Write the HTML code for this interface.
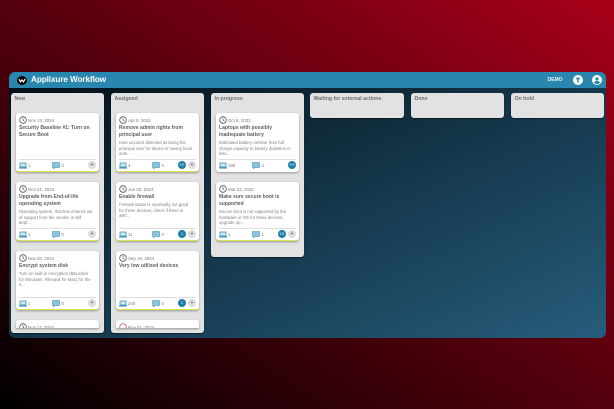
<!DOCTYPE html>
<html><head><meta charset="utf-8"><style>
*{box-sizing:border-box}
html,body{margin:0;padding:0;width:614px;height:409px;overflow:hidden}
body{background:linear-gradient(to bottom left,#a80019,#000);font-family:"Liberation Sans",sans-serif;position:relative}
.win{position:absolute;left:9px;top:72px;width:597px;height:266px;border-radius:6px;overflow:hidden;background:linear-gradient(to bottom right,#020d15,#265d7c);filter:blur(.3px)}
.bar{position:absolute;left:0;top:0;width:597px;height:16px;background:#2986ae}
.logo{position:absolute;left:8px;top:3.5px;width:10px;height:9px;border-radius:50%;background:#000}
.title{position:absolute;left:22px;top:1px;font-size:8.2px;letter-spacing:-.1px;line-height:14px;font-weight:bold;color:#fff;white-space:nowrap}
.demo{position:absolute;left:538.5px;top:2px;font-size:5px;line-height:12px;font-weight:bold;color:#e8f3f8}
.col{position:absolute;background:#e2e2e2;border-radius:3px;box-shadow:0 1px 1px rgba(0,0,0,.45);overflow:hidden}
.h{position:absolute;left:3.5px;top:2.5px;font-size:5.2px;line-height:7px;font-weight:bold;color:#707070;white-space:nowrap}
.card{position:absolute;left:5px;width:83px;height:59px;background:#fff;border-radius:3px;box-shadow:0 1px 2px rgba(0,0,0,.35);overflow:hidden}
.card.y{border-bottom:1.2px solid #dfe650}
.clk{position:absolute;left:3px;top:3px}
.d{position:absolute;left:12px;top:4.5px;font-size:4.4px;line-height:6px;color:#777;white-space:nowrap}
.t{position:absolute;left:3px;top:11.7px;width:80px;font-size:5.05px;line-height:7px;font-weight:bold;color:#606060;white-space:nowrap}
.x{position:absolute;left:3px;width:80px;font-size:4.25px;line-height:5.7px;color:#808080;white-space:nowrap}
.ln{position:absolute;left:3px;right:3px;top:46px;border-top:.5px solid #ddd}
.i1{position:absolute;left:3px;top:49px}
.i2{position:absolute;left:36px;top:49px}
.n1{position:absolute;left:12px;top:49px;font-size:4.2px;line-height:7px;color:#777}
.n2{position:absolute;left:45.5px;top:49px;font-size:4.2px;line-height:7px;color:#777}
.av{position:absolute;left:62px;top:48px;width:8px;height:8px;border-radius:50%;background:#1c7ea8;color:#d8ecf4;font-size:3.6px;line-height:8px;text-align:center}
.pl{position:absolute;left:72px;top:48px;width:8px;height:8px;border-radius:50%;background:#ddd;color:#444;font-size:5px;line-height:8px;text-align:center}
</style></head><body>
<svg width="0" height="0" style="position:absolute"><defs>
<symbol id="ck" viewBox="0 0 8 8"><circle cx="4" cy="4" r="3.3" fill="none" stroke="#555" stroke-width=".8"/><path d="M4 2v2.2l1.4.8" fill="none" stroke="#555" stroke-width=".7"/></symbol>
<symbol id="lp" viewBox="0 0 8 7"><rect x="1" y="1" width="6" height="4" fill="#cfe6f0" stroke="#2986ae" stroke-width=".7"/><path d="M0 6h8" stroke="#2986ae"/></symbol>
<symbol id="cm" viewBox="0 0 8 7"><path d="M.5.5h7v5H3L1.5 7V5.5h-1z" fill="#8cc4dc" stroke="#2986ae" stroke-width=".5"/></symbol>
</defs></svg>
<div class="win">
<div class="bar">
<div class="logo"><svg width="10" height="9" viewBox="0 0 10 9" style="display:block"><path d="M2 3.2l1.5 2.6L5 4 6.3 5.8 8.3 3" fill="none" stroke="#fff" stroke-width="1.2"/></svg></div>
<div class="title">Applixure Workflow</div>
<div class="demo">DEMO</div>
<svg style="position:absolute;left:564px;top:3px" width="10" height="10" viewBox="0 0 10 10"><circle cx="5" cy="5" r="5" fill="#fff"/><path d="M2.5 2.8h5L5.7 5v2.6H4.3V5z" fill="#2986ae"/></svg>
<svg style="position:absolute;left:583px;top:3px" width="10" height="10" viewBox="0 0 10 10"><circle cx="5" cy="5" r="5" fill="#fff"/><circle cx="5" cy="3.8" r="1.6" fill="#2986ae"/><path d="M2 7.6c.8-1.4 1.8-1.8 3-1.8s2.2.4 3 1.8C7 8.7 6 9 5 9S3 8.7 2 7.6z" fill="#2986ae"/></svg>
</div>

<div class="col" style="left:2px;top:21px;width:93px;height:240px"><div class="h">New</div>
<div class="card y" style="top:20px"><svg class="clk" width="8" height="8"><use href="#ck"/></svg><div class="d">Nov 13, 2024</div><div class="t">Security Baseline #1: Turn on<br>Secure Boot</div><div class="ln"></div><svg class="i1" width="8" height="7"><use href="#lp"/></svg><div class="n1">1</div><svg class="i2" width="8" height="7"><use href="#cm"/></svg><div class="n2">0</div><div class="pl">+</div></div>
<div class="card y" style="top:89px"><svg class="clk" width="8" height="8"><use href="#ck"/></svg><div class="d">Nov 21, 2024</div><div class="t">Upgrade from End-of-life<br>operating system</div><div class="x" style="top:27px">Operating system, that has entered out<br>of support from the vendor, is still<br>depl...</div><div class="ln"></div><svg class="i1" width="8" height="7"><use href="#lp"/></svg><div class="n1">1</div><svg class="i2" width="8" height="7"><use href="#cm"/></svg><div class="n2">0</div><div class="pl">+</div></div>
<div class="card y" style="top:158px"><svg class="clk" width="8" height="8"><use href="#ck"/></svg><div class="d">Nov 20, 2024</div><div class="t">Encrypt system disk</div><div class="x" style="top:20px">Turn on built-in encryption (BitLocker<br>for Windows, Filevault for Mac) for the<br>s...</div><div class="ln"></div><svg class="i1" width="8" height="7"><use href="#lp"/></svg><div class="n1">1</div><svg class="i2" width="8" height="7"><use href="#cm"/></svg><div class="n2">0</div><div class="pl">+</div></div>
<div class="card" style="top:227px;height:8px;border-radius:3px 3px 0 0"><svg class="clk" width="8" height="8"><use href="#ck"/></svg><div class="d">Nov 11, 2024</div></div>
</div>

<div class="col" style="left:102px;top:21px;width:93px;height:240px"><div class="h">Assigned</div>
<div class="card y" style="top:20px"><svg class="clk" width="8" height="8"><use href="#ck"/></svg><div class="d">Apr 9, 2024</div><div class="t">Remove admin rights from<br>principal user</div><div class="x" style="top:27px">User account detected as being the<br>principal user for device is having local<br>adm...</div><div class="ln"></div><svg class="i1" width="8" height="7"><use href="#lp"/></svg><div class="n1">4</div><svg class="i2" width="8" height="7"><use href="#cm"/></svg><div class="n2">0</div><div class="av">KS</div><div class="pl">+</div></div>
<div class="card y" style="top:89px"><svg class="clk" width="8" height="8"><use href="#ck"/></svg><div class="d">Jun 20, 2024</div><div class="t">Enable firewall</div><div class="x" style="top:20px">Firewall status is reportedly not good<br>for these devices, check if there is<br>with...</div><div class="ln"></div><svg class="i1" width="8" height="7"><use href="#lp"/></svg><div class="n1">11</div><svg class="i2" width="8" height="7"><use href="#cm"/></svg><div class="n2">0</div><div class="av">C</div><div class="pl">+</div></div>
<div class="card y" style="top:158px"><svg class="clk" width="8" height="8"><use href="#ck"/></svg><div class="d">Sep 19, 2024</div><div class="t">Very low utilized devices</div><div class="ln"></div><svg class="i1" width="8" height="7"><use href="#lp"/></svg><div class="n1">348</div><svg class="i2" width="8" height="7"><use href="#cm"/></svg><div class="n2">0</div><div class="av">C</div><div class="pl">+</div></div>
<div class="card" style="top:227px;height:8px;border-radius:3px 3px 0 0"><svg class="clk" width="8" height="8"><circle cx="4" cy="4" r="3.3" fill="none" stroke="#d6608a" stroke-width=".9"/></svg><div class="d">Nov 01, 2024</div></div>
</div>

<div class="col" style="left:202px;top:21px;width:93px;height:164px"><div class="h">In progress</div>
<div class="card" style="top:20px"><svg class="clk" width="8" height="8"><use href="#ck"/></svg><div class="d">Oct 8, 2022</div><div class="t">Laptops with possibly<br>inadequate battery</div><div class="x" style="top:27px">Estimated battery runtime from full<br>charge capacity to battery depletion is<br>less...</div><div class="ln"></div><svg class="i1" width="8" height="7"><use href="#lp"/></svg><div class="n1">158</div><svg class="i2" width="8" height="7"><use href="#cm"/></svg><div class="n2">4</div><div class="av" style="left:72px">PH</div></div>
<div class="card y" style="top:89px"><svg class="clk" width="8" height="8"><use href="#ck"/></svg><div class="d">Mar 22, 2022</div><div class="t">Make sure secure boot is<br>supported</div><div class="x" style="top:27px">Secure boot is not supported by the<br>hardware or OS for these devices,<br>upgrade op...</div><div class="ln"></div><svg class="i1" width="8" height="7"><use href="#lp"/></svg><div class="n1">1</div><svg class="i2" width="8" height="7"><use href="#cm"/></svg><div class="n2">1</div><div class="av">KS</div><div class="pl">+</div></div>
</div>

<div class="col" style="left:301px;top:21px;width:94px;height:25px"><div class="h">Waiting for external actions</div></div>
<div class="col" style="left:402px;top:21px;width:93px;height:25px"><div class="h">Done</div></div>
<div class="col" style="left:502px;top:21px;width:93px;height:25px"><div class="h">On hold</div></div>
</div>
</body></html>
